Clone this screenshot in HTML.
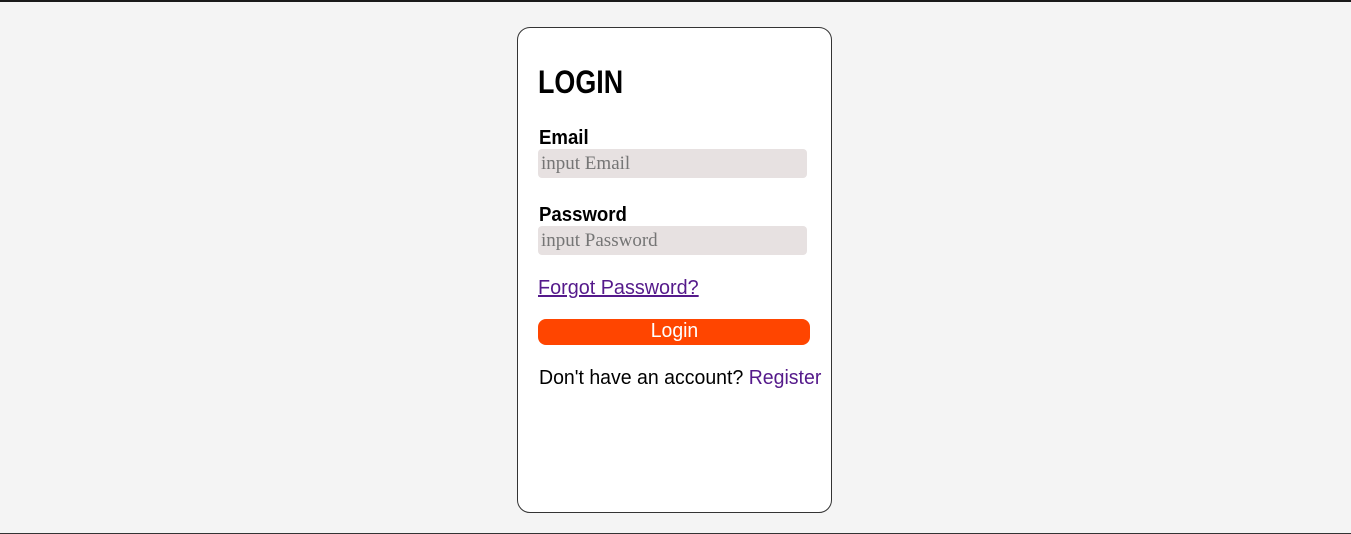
<!DOCTYPE html>
<html><head><meta charset="utf-8"><style>
html,body{margin:0;padding:0}
body{width:1351px;height:534px;background:#f4f4f4;position:relative;overflow:hidden;font-family:"Liberation Sans",Arial,sans-serif}
.top{position:absolute;left:0;top:0;width:1351px;height:2px;background:#1a1a1a}
.bot{position:absolute;left:0;top:533px;width:1351px;height:1px;background:#333}
.card{position:absolute;left:517px;top:27px;width:313px;height:484px;background:#fff;border:1px solid #333;border-radius:13px}
.t{position:absolute;white-space:nowrap;transform-origin:left top;line-height:1}
.inp{position:absolute;left:538px;width:269px;height:29px;background:#e7e1e1;border-radius:4px}
.ph{position:absolute;left:541px;font-family:"Liberation Serif",serif;font-size:19px;color:#757575;line-height:1;white-space:nowrap}
.btn{position:absolute;left:538px;top:319px;width:272px;height:26px;background:#ff4500;border-radius:8px;color:#fff;font-size:20px;text-align:center;line-height:25px}
</style></head><body>
<div class="top"></div>
<div class="card"></div>
<div class="t" style="left:538px;top:66px;font-size:32px;font-weight:bold;transform:scaleX(0.84)">LOGIN</div>
<div class="t" style="left:539px;top:128px;font-size:20px;font-weight:bold;transform:scaleX(0.93)">Email</div>
<div class="inp" style="top:149px"></div>
<div class="ph" style="top:154px">input Email</div>
<div class="t" style="left:539px;top:205px;font-size:20px;font-weight:bold;transform:scaleX(0.93)">Password</div>
<div class="inp" style="top:226px"></div>
<div class="ph" style="top:231px">input Password</div>
<div class="t" style="left:538px;top:278px;font-size:20px;color:#551a8b;text-decoration:underline;transform:scaleX(0.99)">Forgot Password?</div>
<div class="btn"><span style="display:inline-block;transform:scaleX(0.97)">Login</span></div>
<div class="t" style="left:539px;top:368px;font-size:20px;color:#000;transform:scaleX(0.975)">Don't have an account? <span style="color:#551a8b">Register</span></div>
<div class="bot"></div>
</body></html>
